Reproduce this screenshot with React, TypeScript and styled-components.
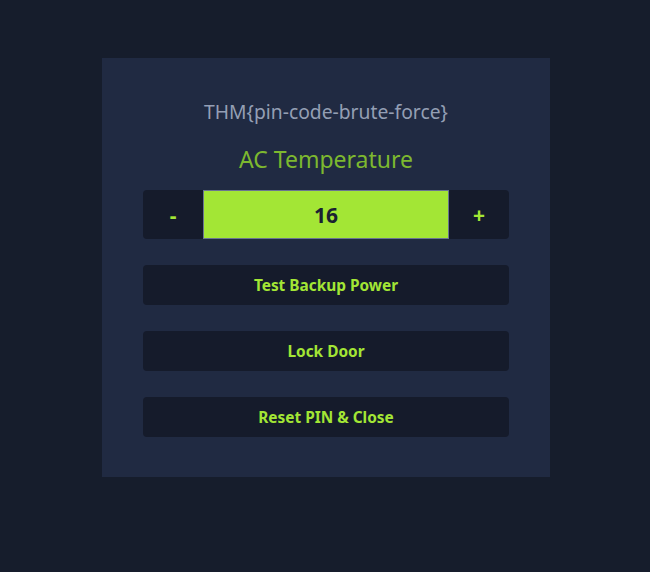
import React, { useState } from 'react'
import styled, { createGlobalStyle } from 'styled-components'

const GlobalStyle = createGlobalStyle`
    html, body {
        margin: 0;
        padding: 0;
        background: #161d2c;
        font-family: "Noto Sans", "Open Sans", sans-serif;
    }
`

const Page = styled.div`
    display: flex;
    justify-content: center;
    align-items: flex-start;
    padding: 58px 0 0 2px;
    min-height: 572px;
    box-sizing: border-box;
`

const Panel = styled.div`
    width: 448px;
    box-sizing: border-box;
    padding: 40px 41px;
    background: #202a42;
    display: flex;
    flex-direction: column;
`

const FlagText = styled.div`
    margin-top: 2px;
    font-size: 19.3px;
    line-height: 24px;
    color: #949fb4;
    text-align: center;
`

const TempLabel = styled.div`
    margin-top: 21px;
    font-size: 23px;
    line-height: 28px;
    color: #7db82f;
    text-align: center;
`

const TempRow = styled.div`
    margin-top: 17px;
    display: flex;
    height: 49px;
`

const StepButton = styled.button<{ $side: 'left' | 'right' }>`
    width: 60px;
    border: none;
    background: #151b2b;
    color: #a3e635;
    font-family: inherit;
    font-size: 21px;
    font-weight: 700;
    cursor: pointer;
    border-radius: ${p => (p.$side === 'left' ? '4px 0 0 4px' : '0 4px 4px 0')};
`

const TempValue = styled.div`
    flex: 1;
    box-sizing: border-box;
    border: 1px solid #6b7590;
    background: #a3e635;
    color: #1a2132;
    font-size: 21px;
    font-weight: 700;
    display: flex;
    align-items: center;
    justify-content: center;
`

const ActionList = styled.div`
    margin-top: 26px;
    display: flex;
    flex-direction: column;
    gap: 26px;
`

const ActionButton = styled.button`
    height: 40px;
    border: none;
    border-radius: 4px;
    background: #151b2b;
    color: #a3e635;
    font-family: inherit;
    font-size: 15.4px;
    font-weight: 700;
    cursor: pointer;
`

const actions = ['Test Backup Power', 'Lock Door', 'Reset PIN & Close']

const App = () => {
    const [temp, setTemp] = useState(16)

    return (
        <>
            <GlobalStyle />
            <Page>
                <Panel>
                    <FlagText>THM{'{'}pin-code-brute-force{'}'}</FlagText>
                    <TempLabel>AC Temperature</TempLabel>
                    <TempRow>
                        <StepButton $side="left" onClick={() => setTemp(temp - 1)}>-</StepButton>
                        <TempValue>{temp}</TempValue>
                        <StepButton $side="right" onClick={() => setTemp(temp + 1)}>+</StepButton>
                    </TempRow>
                    <ActionList>
                        {actions.map(a => (
                            <ActionButton key={a}>{a}</ActionButton>
                        ))}
                    </ActionList>
                </Panel>
            </Page>
        </>
    )
}

export default App
